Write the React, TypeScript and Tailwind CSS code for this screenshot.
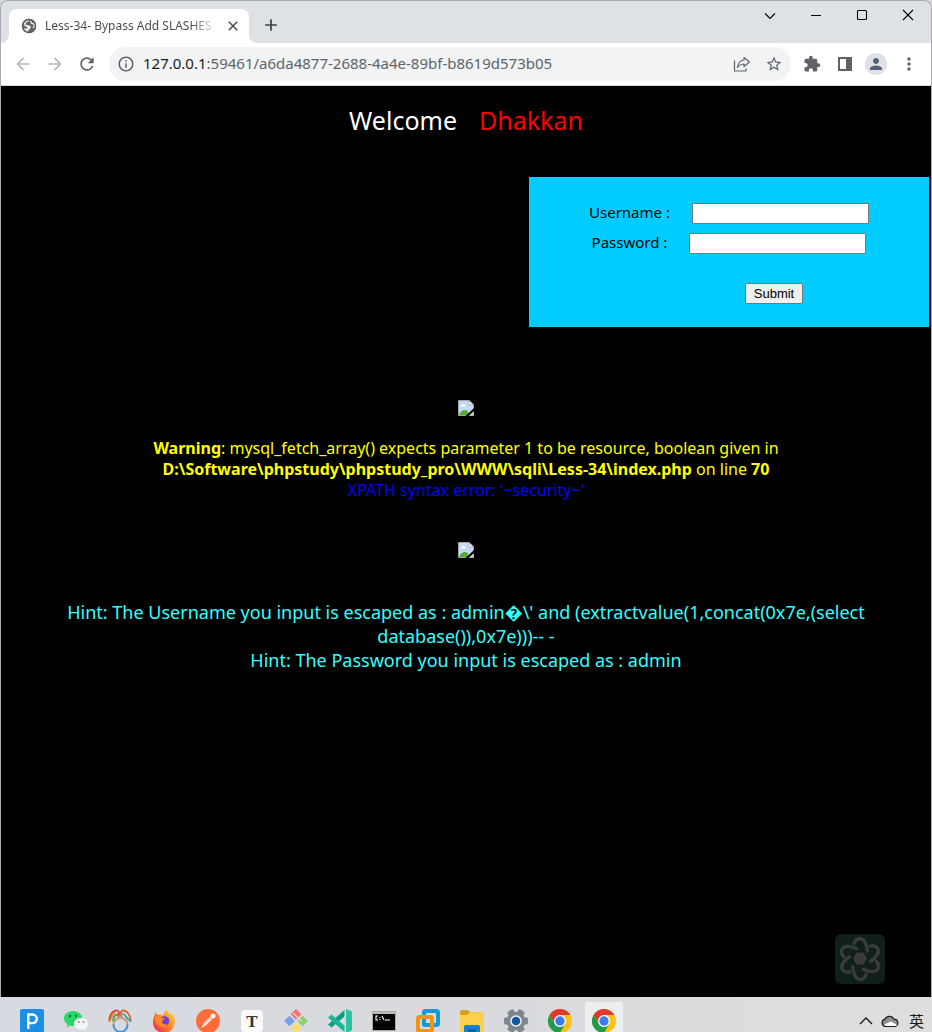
import type { ReactNode } from "react";
import {
  MdArrowBack,
  MdArrowForward,
  MdRefresh,
  MdInfoOutline,
  MdStarBorder,
  MdExtension,
  MdPerson,
  MdMoreVert,
  MdClose,
  MdAdd,
} from "react-icons/md";

const uiFont = "font-['Noto_Sans','Open_Sans','Noto_Sans_CJK_SC',sans-serif]";

function TitleBar() {
  return (
    <header className="flex h-[42px] items-end bg-[#dee1e6] pl-2">
      <div className="relative flex h-[34px] w-60 items-center rounded-t-lg bg-white pl-3 pr-2">
        <svg viewBox="0 0 8 8" className="absolute -left-2 bottom-0 size-2" aria-hidden="true">
          <path d="M8 0v8H0a8 8 0 0 0 8-8z" fill="#fff" />
        </svg>
        <svg viewBox="0 0 8 8" className="absolute -right-2 bottom-0 size-2" aria-hidden="true">
          <path d="M0 0v8h8a8 8 0 0 1-8-8z" fill="#fff" />
        </svg>
        <svg viewBox="0 0 16 16" className="size-4 shrink-0" aria-hidden="true">
          <circle cx="8" cy="8" r="7.200" fill="#5f6368" />
          <path d="M8.500 1.500l-1 2L5 4.500 4.800 7l3 .3 2 1.200-.3 2L7.500 12 7 14.500 8 15c-3.500 0-5.500-2.500-6-5.500l2.500 1.300 2-.3L6 9 3.500 8 3 5l2-2z" fill="#fff" fillOpacity=".9" />
          <path d="M9.500 3l1 2.300L12.500 6l1 2-1.500 2" fill="none" stroke="#fff" strokeWidth="1.100" />
          <circle cx="8" cy="8" r="6.500" fill="none" stroke="#5f6368" strokeWidth="1.500" />
        </svg>
        <span className="ml-2 w-[172px] overflow-hidden whitespace-nowrap bg-gradient-to-r from-[#45494d] from-85% to-transparent bg-clip-text text-[12px] text-transparent">
          Less-34- Bypass Add SLASHES
        </span>
        <button type="button" aria-label="Close tab" className="ml-2 text-[#3c4043]">
          <MdClose className="size-4" />
        </button>
      </div>
      <button type="button" aria-label="New tab" className="mb-2 ml-3 text-[#3c4043]">
        <MdAdd className="size-5" />
      </button>
      <div className="ml-auto flex self-start text-black">
        <WindowButton label="Search tabs">
          <path d="M3 5.500l5 5 5-5" />
        </WindowButton>
        <WindowButton label="Minimize">
          <path d="M3 7.500h10" />
        </WindowButton>
        <WindowButton label="Maximize">
          <rect x="3.500" y="2.500" width="9" height="9" rx="1" />
        </WindowButton>
        <WindowButton label="Close">
          <path d="M3 2l10 10M13 2L3 12" />
        </WindowButton>
      </div>
    </header>
  );
}

function WindowButton({ label, children }: { label: string; children: ReactNode }) {
  return (
    <button type="button" aria-label={label} className="flex h-[30px] w-[46px] items-center justify-center">
      <svg viewBox="0 0 16 16" className="size-4" fill="none" stroke="currentColor" strokeWidth="1.1">
        {children}
      </svg>
    </button>
  );
}

function Toolbar() {
  return (
    <div className="flex h-[43px] items-center border-b border-[#d5d7da] bg-white pl-3 pr-3 text-[#5f6368]">
      <button type="button" aria-label="Back" className="text-[#b8babc]">
        <MdArrowBack className="size-5" />
      </button>
      <button type="button" aria-label="Forward" className="ml-3 text-[#b8babc]">
        <MdArrowForward className="size-5" />
      </button>
      <button type="button" aria-label="Reload" className="ml-3">
        <MdRefresh className="size-5" />
      </button>
      <div className="ml-3 flex h-[34px] min-w-0 flex-1 items-center rounded-full bg-[#f1f3f4] pl-2 pr-2">
        <MdInfoOutline className="size-[18px] shrink-0" />
        <span className="ml-2 flex-1 truncate pb-[2px] text-[15px]">
          <span className="text-[#202124]">127.0.0.1</span>:59461/a6da4877-2688-4a4e-89bf-b8619d573b05
        </span>
        <button type="button" aria-label="Share">
          <svg viewBox="0 0 18 18" className="size-[18px]" fill="none" stroke="currentColor" strokeWidth="1.2" strokeLinejoin="round">
            <path d="M1.500 5.500v10.500h11.500V13.500" />
            <path d="M11 2.500L16.500 7 11 11.500V9C8 9 6.500 9.800 4.500 12.500 5 8 7.500 5.500 11 5z" />
          </svg>
        </button>
        <button type="button" aria-label="Bookmark" className="ml-[14px]">
          <MdStarBorder className="size-[18px]" />
        </button>
      </div>
      <button type="button" aria-label="Extensions" className="ml-3">
        <MdExtension className="size-[18px]" />
      </button>
      <button type="button" aria-label="Side panel" className="ml-4">
        <svg viewBox="0 0 16 16" className="size-4" aria-hidden="true">
          <path fill="currentColor" fillRule="evenodd" d="M1 1h14v14H1zM3 3v10h6V3z" />
        </svg>
      </button>
      <button type="button" aria-label="Profile" className="ml-3 flex size-[22px] items-center justify-center rounded-full bg-[#dee1e6] text-[#53607a]">
        <MdPerson className="size-[18px]" />
      </button>
      <button type="button" aria-label="Menu" className="ml-3">
        <MdMoreVert className="size-5" />
      </button>
    </div>
  );
}

function BrokenImage() {
  return (
    <svg viewBox="0 0 16 16" className="size-4" role="img" aria-label="Broken image">
      <path d="M0.500 0.500h10.500l4.500 4.500v10.500h-15z" fill="#c6d9f7" stroke="#a3a3a3" />
      <path d="M11 0.500V5h4.500z" fill="#fff" stroke="#a3a3a3" strokeWidth=".8" />
      <path d="M2.500 6.500c0-1.500 1.300-1.600 1.600-1.500.5-1.700 2.600-1.300 2.700 0 1.300 0 1.300 1.500.7 1.500z" fill="#fff" />
      <path d="M1 15c1.500-4 5-6 8-4.500l3 4.500z" fill="#52ad34" />
      <path d="M16 8L7.500 16H11l5-5z" fill="#000" />
      <path d="M11 15.500h4.500V12z" fill="#d0d0d0" />
    </svg>
  );
}

function LoginForm() {
  const field = "h-[21px] w-[177px] rounded-[1px] border border-[#767676] bg-white px-1 font-['Liberation_Sans',sans-serif] text-[13px] text-black outline-none";
  return (
    <form
      onSubmit={(e) => e.preventDefault()}
      className="ml-auto mr-[2px] flex h-[150px] w-[400px] max-w-full flex-col items-center bg-[#00ccff] pt-[26px] text-[15px] leading-[19px] text-black"
    >
      <div className="flex gap-[22px]">
        <label htmlFor="uname">Username :</label>
        <input id="uname" name="uname" type="text" className={field} />
      </div>
      <div className="mt-[9px] flex gap-[22px]">
        <label htmlFor="passwd">Password :</label>
        <input id="passwd" name="passwd" type="password" className={field} />
      </div>
      <div className="mt-[29px] pl-[90px]">
        <button
          type="submit"
          className="block h-[21px] w-[58px] rounded-[2px] border border-[#767676] bg-[#efefef] font-['Liberation_Sans',sans-serif] text-[13px] leading-[19px]"
        >
          Submit
        </button>
      </div>
    </form>
  );
}

function AssistantBadge() {
  const petals = [0, 60, 120, 180, 240, 300];
  return (
    <button type="button" aria-label="Assistant" className="absolute bottom-[13px] right-[46px] size-[50px] rounded-md bg-[#0f201c]">
      <svg viewBox="0 0 50 50" className="size-full" fill="none" stroke="#3b3b3b" strokeWidth="3.400" strokeLinecap="round">
        {petals.map((angle) => (
          <path key={angle} transform={`rotate(${angle} 25 25)`} d="M19 9.500C21 3.500 26.500 3 29.500 7.500c1.800 3 2.800 6.500 2.800 9.500" />
        ))}
        <path d="M21.500 18.500h7l3.500 6-3.500 6h-7l-3.500-6z" fill="#3b3b3b" stroke="none" />
      </svg>
    </button>
  );
}

function PageContent() {
  return (
    <main className="relative flex-1 bg-black pb-24 pt-4 text-center">
      <h1 className="flex justify-center gap-[22px] text-[25px] leading-[36px] text-white">
        <span>Welcome</span>
        <span className="text-[#ff0000]">Dhakkan</span>
      </h1>
      <div className="mt-[39px]">
        <LoginForm />
      </div>
      <div className="mt-[73px] flex justify-center">
        <BrokenImage />
      </div>
      <div className="mx-auto mt-[22px] max-w-[916px] px-2 text-[16px] leading-[21px] text-[#ffff00]">
        <p>
          <b>Warning</b>: mysql_fetch_array() expects parameter 1 to be resource, boolean given in
          <br />
          <b>D:\Software\phpstudy\phpstudy_pro\WWW\sqli\Less-34\index.php</b> on line <b>70</b>
        </p>
        <p className="text-[#0000ff]">XPATH syntax error: '~security~'</p>
      </div>
      <div className="mt-[41px] flex justify-center">
        <BrokenImage />
      </div>
      <div className="mt-[42px] px-2 text-[18px] leading-[24px] text-[#33ffff]">
        <p>
          Hint: The Username you input is escaped as : admin�\' and (extractvalue(1,concat(0x7e,(select
          database()),0x7e)))-- -
        </p>
        <p>Hint: The Password you input is escaped as : admin</p>
      </div>
      <AssistantBadge />
    </main>
  );
}

function ChromeIcon() {
  return (
    <>
      <circle cx="12" cy="12" r="12" fill="#fbc116" />
      <path d="M12 6h10.400A12 12 0 0 0 1.600 6l5.200 9z" fill="#dd3b2f" />
      <path d="M1.600 6A12 12 0 0 0 12 24l5.200-9L12 17.500 6.800 15z" fill="#209b4e" />
      <circle cx="12" cy="12" r="6" fill="#fff" />
      <circle cx="12" cy="12" r="4.700" fill="#3b7ded" />
    </>
  );
}

const apps: { name: string; active?: boolean; art: ReactNode }[] = [
  {
    name: "PicPick",
    art: (
      <>
        <rect width="24" height="24" rx="2" fill="#1b8fe3" />
        <path d="M8.300 20V5.500h4.200a4.300 4.300 0 0 1 0 8.600H8.300" fill="none" stroke="#fff" strokeWidth="2.400" />
      </>
    ),
  },
  {
    name: "WeChat",
    art: (
      <>
        <path d="M9 2c5 0 9 3 9 7.200S14 17 9 17c-1 0-2-.1-3-.5L2.600 18.500l.8-3.300C1.200 13.800 0 11.700 0 9.200 0 5 4 2 9 2z" fill="#2bd66b" />
        <circle cx="6" cy="7" r="1.200" fill="#08783a" />
        <circle cx="12" cy="7" r="1.200" fill="#08783a" />
        <path d="M17 9c4 0 7 2.500 7 5.700 0 1.900-.8 3.400-2.200 4.400l.5 2.400-2.700-1.400c-6 1.600-9.600-1.900-9.600-5.400C10 11.500 13 9 17 9z" fill="#f4f6f4" />
        <circle cx="14.700" cy="13" r="1" fill="#888" />
        <circle cx="19.500" cy="13" r="1" fill="#888" />
      </>
    ),
  },
  {
    name: "Navicat",
    art: (
      <g fill="none" strokeWidth="1.800" strokeLinecap="round">
        <path d="M1.500 12C1 6 5 1 9.500 1.500c2 .5 1.500 4 1 6" stroke="#e5392b" />
        <path d="M1.500 12c2-1 1.500-6 5-8" stroke="#e88a25" />
        <path d="M5 11.500C5.500 8 7 6 9.500 5.500" stroke="#44aa45" />
        <path d="M13.500 7.500c-1-3-1-6 1.500-6 4.500 0 7.500 5 7.500 10.500" stroke="#e0642f" />
        <path d="M15 5c3 1 3.500 5 7.500 7" stroke="#2aa7a0" />
        <path d="M6.500 19.500a7 7 0 1 1 12 0" stroke="#b99572" />
        <path d="M5.500 16a7 7 0 0 0 14 0" stroke="#3d93dc" />
      </g>
    ),
  },
  {
    name: "Firefox",
    art: (
      <>
        <defs>
          <linearGradient id="fox" x1="1" y1="0" x2="0" y2="1">
            <stop offset="0" stopColor="#ffe23c" />
            <stop offset=".45" stopColor="#ff8b20" />
            <stop offset="1" stopColor="#e61b64" />
          </linearGradient>
        </defs>
        <path d="M3.500 3l2 3 3-.5 2 1.500c1-3 2.500-4 4.500-7 0 2.500 1.500 4 4 6l.5-2c3.200 3 3.700 7 3.300 10C22 20 17.500 24 12 24S1 20 1 13.500C1 9 2.500 7 3.500 3z" fill="url(#fox)" />
        <circle cx="12.500" cy="12" r="4.800" fill="#7341cf" />
        <path d="M3 8c3-2 6-1 7 1h3c-1 2-3 2-3 4 0 2 3 3 5 2-1 3-5 4-8 2-3-2-4-5-4-9z" fill="#ff8a24" />
      </>
    ),
  },
  {
    name: "Postman",
    art: (
      <>
        <circle cx="12" cy="12" r="12" fill="#ff6c37" />
        <path d="M5.500 19l2-5L14 8l2 2-6 6z" fill="#fff" />
        <circle cx="17" cy="7" r="2.500" fill="#fff" />
        <path d="M7 16l8-7.500M5.500 19l3.500-2" stroke="#ff9472" strokeWidth="1" />
      </>
    ),
  },
  {
    name: "Typora",
    art: (
      <>
        <rect x="1" y="1" width="22" height="22" rx="4" fill="#fafafa" />
        <text x="12" y="17.500" textAnchor="middle" fontFamily="Liberation Serif" fontWeight="700" fontSize="17" fill="#333">
          T
        </text>
      </>
    ),
  },
  {
    name: "Git Bash",
    art: (
      <>
        <rect x="8.200" y="1.500" width="7.600" height="7.600" transform="rotate(45 12 5.300)" fill="#f17070" />
        <rect x="1.700" y="8.200" width="7.600" height="7.600" transform="rotate(45 5.500 12)" fill="#72a2ee" />
        <rect x="14.700" y="8.200" width="7.600" height="7.600" transform="rotate(45 18.500 12)" fill="#87d36c" />
        <rect x="8.200" y="14.900" width="7.600" height="7.600" transform="rotate(45 12 18.700)" fill="#fbdc70" />
        <path d="M9 4l5 5v7M13 8l5 4" stroke="#d9dcdf" strokeWidth="1.200" fill="none" />
      </>
    ),
  },
  {
    name: "VS Code Insiders",
    art: (
      <>
        <path d="M18 0l6 2.600v18.800L18 24z" fill="#29c5a2" />
        <path d="M16.500 1v6.500L3.500 18.500 0 15.500z" fill="#119c80" />
        <path d="M0 8.500l3.500-3L16.500 16.500V23z" fill="#1cb597" />
      </>
    ),
  },
  {
    name: "Command Prompt",
    art: (
      <>
        <rect x="0.500" y="2.500" width="23" height="19" fill="#050505" stroke="#aaa" />
        <path d="M1 3h22v2H1z" fill="#bbb" />
        <path d="M6 7H4v4h2M8 8v1M8 10v1M10 7l2 4M13 11h5" fill="none" stroke="#fff" strokeWidth="1.100" />
      </>
    ),
  },
  {
    name: "VMware",
    art: (
      <g fill="none" strokeWidth="4">
        <rect x="8" y="2" width="14" height="14" rx="1.500" stroke="#139bd7" />
        <rect x="2" y="8" width="14" height="14" rx="1.500" stroke="#f79218" />
        <path d="M8 11v3.500A1.500 1.500 0 0 0 9.500 16H13" stroke="#139bd7" />
      </g>
    ),
  },
  {
    name: "File Explorer",
    art: (
      <>
        <path d="M0 3a2 2 0 0 1 2-2h6l2 2.500h12a2 2 0 0 1 2 2V9H0z" fill="#d8a019" />
        <path d="M0 6h7l3-2.500h14V24H0z" fill="#ffd04d" />
        <path d="M4 24v-6a2 2 0 0 1 2-2h12a2 2 0 0 1 2 2v6z" fill="#1682d4" />
        <path d="M8 20h8v4H8z" fill="#075eaa" />
      </>
    ),
  },
  {
    name: "Settings",
    art: (
      <>
        {[30, 90, 150].map((angle) => (
          <rect key={angle} x="8.500" y="0" width="7" height="24" rx="1.500" transform={`rotate(${angle} 12 12)`} fill="#7d858d" />
        ))}
        <circle cx="12" cy="12" r="9.300" fill="#7d858d" />
        <circle cx="12" cy="12" r="5.800" fill="#f2f5f7" />
        <circle cx="12" cy="12" r="4.300" fill="#1259a5" />
      </>
    ),
  },
  { name: "Chrome", art: <ChromeIcon /> },
  { name: "Chrome, active window", active: true, art: <ChromeIcon /> },
];

function Taskbar() {
  return (
    <footer className="flex h-[35px] items-start overflow-hidden bg-gradient-to-r from-[#d7dae2] via-[#d9dadd] to-[#dedede] pl-[10px] pr-2">
      <nav aria-label="Taskbar" className="flex">
        {apps.map((app) => (
          <button
            key={app.name}
            type="button"
            aria-label={app.name}
            className="flex h-[35px] w-11 shrink-0 justify-center px-[3px] pt-[5px]"
          >
            <span className={`flex h-10 w-[38px] justify-center rounded-[3px] pt-[7px] ${app.active ? "bg-[#edeef0]" : ""}`}>
              <svg viewBox="0 0 24 24" className="size-6">
                {app.art}
              </svg>
            </span>
          </button>
        ))}
      </nav>
      <div className="ml-auto flex items-center gap-2 pt-[12px] text-[#1a1a1a]">
        <button type="button" aria-label="Show hidden icons">
          <svg viewBox="0 0 14 14" className="size-[14px]" fill="none" stroke="currentColor" strokeWidth="1.400">
            <path d="M1 10l6-6 6 6" />
          </svg>
        </button>
        <button type="button" aria-label="OneDrive">
          <svg viewBox="0 0 18 14" className="h-[14px] w-[18px]">
            <path d="M4.500 12.500a3.700 3.700 0 0 1-.4-7.300C5 2.200 10.500.5 13 5.200c5 .3 5.200 7.300 0 7.300z" fill="#8f8f8f" stroke="#1a1a1a" strokeWidth="1.200" />
            <path d="M3 10.500L10 7.500l6 3.200c-1 1.200-2 1.200-3 1.200H4.500z" fill="#fff" />
          </svg>
        </button>
        <span className="ml-[2px] text-[15px] leading-[24px]">英</span>
      </div>
    </footer>
  );
}

export default function App() {
  return (
    <div className={`flex min-h-screen flex-col bg-[#d8dade] ${uiFont}`}>
      <div className="flex flex-1 flex-col overflow-hidden rounded-t-lg border-x border-t border-[#a9abae]">
        <TitleBar />
        <Toolbar />
        <PageContent />
      </div>
      <Taskbar />
    </div>
  );
}
